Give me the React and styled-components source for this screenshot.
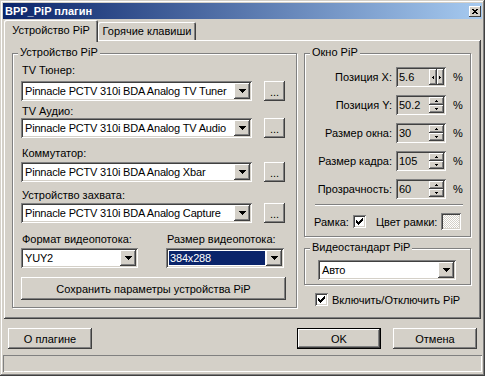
import React from 'react';
import styled, { createGlobalStyle, css } from 'styled-components';

const GlobalStyle = createGlobalStyle`
  html, body { margin: 0; padding: 0; background: #d4d0c8; }
  body { font-family: "Liberation Sans", Arial, sans-serif; font-size: 11px; color: #000; }
  * { box-sizing: border-box; }
`;

const raised = css`
  box-shadow: inset -1px -1px #404040, inset 1px 1px #fff, inset -2px -2px #808080, inset 2px 2px #d4d0c8;
`;
const sunken = css`
  box-shadow: inset 1px 1px #808080, inset -1px -1px #fff, inset 2px 2px #404040, inset -2px -2px #d4d0c8;
`;

const Window = styled.div`
  width: 485px;
  height: 376px;
  padding: 3px;
  background: #d4d0c8;
  box-shadow: inset -1px -1px #404040, inset 1px 1px #d4d0c8, inset -2px -2px #808080, inset 2px 2px #fff;
  display: flex;
  flex-direction: column;
`;

const TitleBar = styled.div`
  flex: none;
  height: 16px;
  background: linear-gradient(90deg, #0a246a, #a6caf0);
  display: flex;
  align-items: center;
  justify-content: space-between;
  padding: 0 1px 0 2px;
`;

const Title = styled.span`
  color: #fff;
  font-weight: bold;
  font-size: 11px;
  line-height: 16px;
`;

const CloseButton = styled.div`
  width: 12px;
  height: 11px;
  background: #d4d0c8;
  box-shadow: inset -1px -1px #404040, inset 1px 1px #fff;
  display: flex;
  align-items: center;
  justify-content: center;
  padding-right: 1px;
`;

const TabStrip = styled.div`
  flex: none;
  height: 21px;
  display: flex;
  align-items: flex-end;
  padding-left: 1px;
  position: relative;
  z-index: 1;
`;

const Tab = styled.div`
  width: ${(p) => p.$w}px;
  height: ${(p) => (p.$active ? 22 : 18)}px;
  margin-bottom: ${(p) => (p.$active ? -2 : 0)}px;
  padding-bottom: ${(p) => (p.$active ? 3 : 0)}px;
  background: #d4d0c8;
  border-radius: 2px 2px 0 0;
  box-shadow: inset 1px 1px #fff, inset -1px 0 #404040, inset -2px 0 #808080;
  display: flex;
  align-items: center;
  justify-content: center;
  white-space: nowrap;
`;

const TabPanel = styled.div`
  flex: none;
  height: 279px;
  margin: 0 1px;
  ${raised};
  padding: 13px 10px 0 8px;
  display: flex;
  align-items: flex-start;
  gap: 7px;
`;

const Group = styled.div`
  position: relative;
  border: 1px solid #808080;
  box-shadow: inset 1px 1px #fff, 1px 1px #fff;
`;

const Legend = styled.span`
  position: absolute;
  top: -8px;
  left: 5px;
  padding: 0 2px;
  line-height: 13px;
  background: #d4d0c8;
  white-space: nowrap;
`;

const DeviceGroup = styled(Group)`
  width: 285px;
  padding: 10px 10px 7px 8px;
  display: flex;
  flex-direction: column;
`;

const Field = styled.div`
  margin-top: ${(p) => p.$mt || 0}px;
  display: flex;
  flex-direction: column;
  gap: ${(p) => p.$gap || 0}px;
`;

const FieldLabel = styled.div`
  line-height: 13px;
  padding-left: 1px;
  white-space: nowrap;
`;

const ComboRow = styled.div`
  display: flex;
  align-items: center;
  gap: 12px;
`;

const Combo = styled.div`
  width: ${(p) => p.$w}px;
  height: 20px;
  background: #fff;
  ${sunken};
  padding: 2px;
  display: flex;
`;

const ComboValue = styled.div`
  flex: 1;
  min-width: 0;
  display: flex;
  align-items: center;
  padding-left: 2px;
  white-space: nowrap;
  overflow: hidden;
  letter-spacing: -0.18px;
  ${(p) =>
    p.$selected &&
    css`
      background: #0a246a;
      color: #fff;
      margin: 1px;
      padding-left: 1px;
    `}
`;

const DropButton = styled.div`
  flex: none;
  width: 16px;
  height: 16px;
  background: #d4d0c8;
  ${raised};
  display: flex;
  align-items: center;
  justify-content: center;
`;

const SmallButton = styled.div`
  width: 21px;
  height: 20px;
  background: #d4d0c8;
  ${raised};
  display: flex;
  align-items: center;
  justify-content: center;
  padding-top: 2px;
`;

const SplitRow = styled.div`
  margin-top: 10px;
  display: flex;
  gap: 28px;
`;

const WideButton = styled.div`
  margin-top: 9px;
  height: 23px;
  background: #d4d0c8;
  ${raised};
  display: flex;
  align-items: center;
  justify-content: center;
`;

const RightColumn = styled.div`
  width: 167px;
  display: flex;
  flex-direction: column;
`;

const WindowGroup = styled(Group)`
  padding: 13px 7px 6px 9px;
  display: flex;
  flex-direction: column;
`;

const SpinRow = styled.div`
  height: 20px;
  margin-top: ${(p) => (p.$first ? 0 : 8)}px;
  display: flex;
  align-items: center;
  justify-content: flex-end;
`;

const SpinLabel = styled.span`
  margin-right: 4px;
  white-space: nowrap;
`;

const Edit = styled.div`
  width: 50px;
  height: 20px;
  background: #d4d0c8;
  ${sunken};
  padding: 2px;
  display: flex;
`;

const EditText = styled.span`
  flex: 1;
  line-height: 16px;
  padding-left: 1px;
`;

const Spinner = styled.div`
  width: 15px;
  display: flex;
  flex-direction: ${(p) => (p.$horizontal ? 'row' : 'column')};
`;

const SpinButton = styled.div`
  flex: 1;
  background: #d4d0c8;
  ${raised};
  display: flex;
  align-items: center;
  justify-content: center;
`;

const Percent = styled.span`
  margin-left: 7px;
  width: 10px;
`;

const Separator = styled.div`
  margin-top: 5px;
  margin-left: 1px;
  height: 2px;
  border-top: 1px solid #808080;
  border-bottom: 1px solid #fff;
`;

const FrameRow = styled.div`
  margin-top: 7px;
  height: 17px;
  display: flex;
  align-items: center;
`;

const CheckBox = styled.div`
  flex: none;
  width: 13px;
  height: 13px;
  background: #fff;
  ${sunken};
  padding: 3px;
  display: flex;
  margin-left: ${(p) => p.$ml || 0}px;
  margin-right: ${(p) => p.$mr || 0}px;
`;

const InlineLabel = styled.span`
  margin-left: ${(p) => p.$ml || 0}px;
  white-space: nowrap;
`;

const Swatch = styled.div`
  width: 20px;
  height: 17px;
  margin-left: 4px;
  ${sunken};
  background: repeating-conic-gradient(#fff 0 25%, #d4d0c8 0 50%) 0 0 / 2px 2px;
`;

const StandardGroup = styled(Group)`
  margin-top: 11px;
  padding: 11px 13px 4px 13px;
`;

const EnableRow = styled.div`
  margin-top: 8px;
  padding-left: 11px;
  display: flex;
  align-items: center;
`;

const ButtonRow = styled.div`
  flex: none;
  margin-top: 9px;
  height: 21px;
  padding: 0 5px;
  display: flex;
  gap: 12px;
`;

const Spacer = styled.div`
  flex: 1;
`;

const PushButton = styled.div`
  width: 84px;
  height: 21px;
  background: #d4d0c8;
  display: flex;
  align-items: center;
  justify-content: center;
  ${(p) =>
    p.$default
      ? css`
          box-shadow: inset 0 0 0 1px #000, inset -2px -2px #404040, inset 2px 2px #fff, inset -3px -3px #808080;
        `
      : raised};
`;

const StatusBar = styled.div`
  flex: none;
  margin-top: 6px;
  height: 17px;
  box-shadow: inset 1px 1px #808080, inset -1px -1px #fff;
`;

const DownArrow = () => (
  <svg width="7" height="4" viewBox="0 0 7 4" shapeRendering="crispEdges">
    <path d="M0 0h7v1H0zM1 1h5v1H1zM2 2h3v1H2zM3 3h1v1H3z" fill="#000" />
  </svg>
);

const TinyArrow = ({ dir }) => {
  const paths = {
    up: 'M1 0h1v1H1zM0 1h3v1H0z',
    down: 'M0 0h3v1H0zM1 1h1v1H1z',
    left: 'M1 0h1v3H1zM0 1h1v1H0z',
    right: 'M0 0h1v3H0zM1 1h1v1H1z',
  };
  const horiz = dir === 'left' || dir === 'right';
  return (
    <svg width={horiz ? 2 : 3} height={horiz ? 3 : 2} shapeRendering="crispEdges">
      <path d={paths[dir]} fill="#000" />
    </svg>
  );
};

const CheckMark = () => (
  <svg width="7" height="7" viewBox="0 0 7 7" shapeRendering="crispEdges">
    <path
      d="M6 0h1v1H6zM5 1h2v1H5zM0 2h1v1H0zM4 2h3v1H4zM0 3h2v1H0zM3 3h3v1H3zM0 4h5v1H0zM1 5h3v1H1zM2 6h1v1H2z"
      fill="#000"
    />
  </svg>
);

const CloseGlyph = () => (
  <svg width="6" height="5" viewBox="0 0 6 5" shapeRendering="crispEdges">
    <path d="M0 0h2v1H0zM4 0h2v1H4zM1 1h4v1H1zM2 2h2v1H2zM1 3h4v1H1zM0 4h2v1H0zM4 4h2v1H4z" fill="#000" />
  </svg>
);

const ComboBox = ({ width, value, selected }) => (
  <Combo $w={width}>
    <ComboValue $selected={selected}>{value}</ComboValue>
    <DropButton>
      <DownArrow />
    </DropButton>
  </Combo>
);

const devices = [
  { label: 'TV Тюнер:', value: 'Pinnacle PCTV 310i BDA Analog TV Tuner', mt: 0, gap: 4 },
  { label: 'TV Аудио:', value: 'Pinnacle PCTV 310i BDA Analog TV Audio', mt: 4, gap: 0 },
  { label: 'Коммутатор:', value: 'Pinnacle PCTV 310i BDA Analog Xbar', mt: 9, gap: 2 },
  { label: 'Устройство захвата:', value: 'Pinnacle PCTV 310i BDA Analog Capture', mt: 7, gap: 1 },
];

const spins = [
  { label: 'Позиция X:', value: '5.6', horizontal: true },
  { label: 'Позиция Y:', value: '50.2' },
  { label: 'Размер окна:', value: '30' },
  { label: 'Размер кадра:', value: '105' },
  { label: 'Прозрачность:', value: '60' },
];

export default function App() {
  return (
    <>
      <GlobalStyle />
      <Window>
        <TitleBar>
          <Title>BPP_PiP плагин</Title>
          <CloseButton>
            <CloseGlyph />
          </CloseButton>
        </TitleBar>
        <TabStrip>
          <Tab $active $w={94}>Устройство PiP</Tab>
          <Tab $w={98}>Горячие клавиши</Tab>
        </TabStrip>
        <TabPanel>
          <DeviceGroup>
            <Legend>Устройство PiP</Legend>
            {devices.map((d) => (
              <Field key={d.label} $mt={d.mt} $gap={d.gap}>
                <FieldLabel>{d.label}</FieldLabel>
                <ComboRow>
                  <ComboBox width={231} value={d.value} />
                  <SmallButton>...</SmallButton>
                </ComboRow>
              </Field>
            ))}
            <SplitRow>
              <Field $gap={2}>
                <FieldLabel>Формат видеопотока:</FieldLabel>
                <ComboBox width={117} value="YUY2" />
              </Field>
              <Field $gap={2}>
                <FieldLabel>Размер видеопотока:</FieldLabel>
                <ComboBox width={118} value="384x288" selected />
              </Field>
            </SplitRow>
            <WideButton>Сохранить параметры устройства PiP</WideButton>
          </DeviceGroup>
          <RightColumn>
            <WindowGroup>
              <Legend>Окно PiP</Legend>
              {spins.map((s, i) => (
                <SpinRow key={s.label} $first={i === 0}>
                  <SpinLabel>{s.label}</SpinLabel>
                  <Edit>
                    <EditText>{s.value}</EditText>
                    <Spinner $horizontal={s.horizontal}>
                      <SpinButton>
                        <TinyArrow dir={s.horizontal ? 'left' : 'up'} />
                      </SpinButton>
                      <SpinButton>
                        <TinyArrow dir={s.horizontal ? 'right' : 'down'} />
                      </SpinButton>
                    </Spinner>
                  </Edit>
                  <Percent>%</Percent>
                </SpinRow>
              ))}
              <Separator />
              <FrameRow>
                <InlineLabel>Рамка:</InlineLabel>
                <CheckBox $ml={4}>
                  <CheckMark />
                </CheckBox>
                <InlineLabel $ml={10}>Цвет рамки:</InlineLabel>
                <Swatch />
              </FrameRow>
            </WindowGroup>
            <StandardGroup>
              <Legend>Видеостандарт PiP</Legend>
              <ComboBox width={138} value="Авто" />
            </StandardGroup>
            <EnableRow>
              <CheckBox $mr={4}>
                <CheckMark />
              </CheckBox>
              <InlineLabel>Включить/Отключить PiP</InlineLabel>
            </EnableRow>
          </RightColumn>
        </TabPanel>
        <ButtonRow>
          <PushButton>О плагине</PushButton>
          <Spacer />
          <PushButton $default>OK</PushButton>
          <PushButton>Отмена</PushButton>
        </ButtonRow>
        <StatusBar />
      </Window>
    </>
  );
}
